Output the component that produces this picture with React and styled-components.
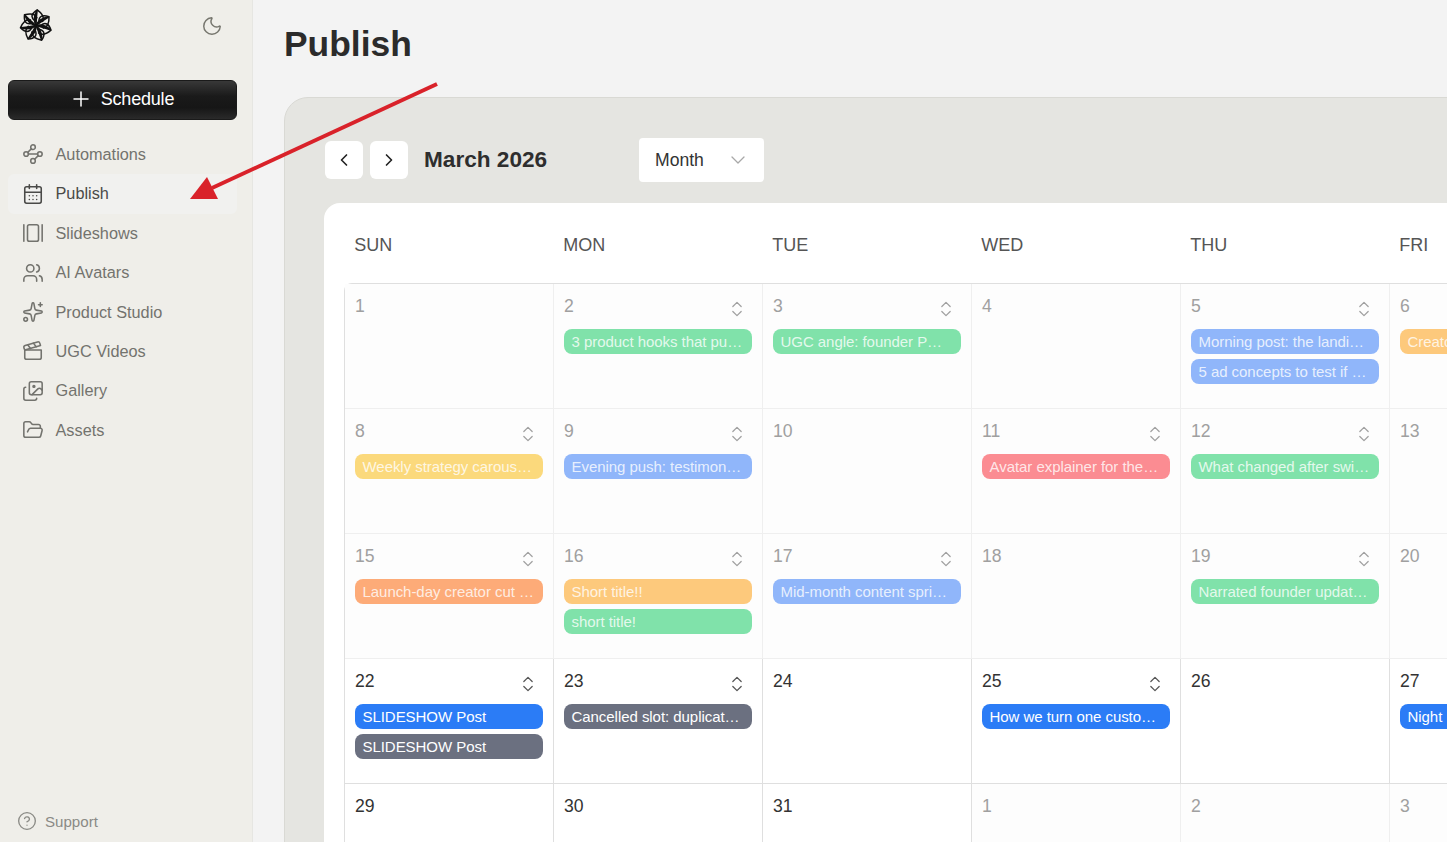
import React from 'react';
import styled, { createGlobalStyle } from 'styled-components';
import {
  CalendarDays,
  ChevronDown,
  ChevronLeft,
  ChevronRight,
  ChevronsUpDown,
  CircleHelp,
  Clapperboard,
  FolderOpen,
  GalleryHorizontal,
  Images,
  Moon,
  Plus,
  Sparkles,
  Users,
  Waypoints,
} from 'lucide-react';

const GlobalStyle = createGlobalStyle`
  html, body {
    margin: 0;
    height: 100%;
    overflow: hidden;
    background: #f3f3f3;
    font-family: "Liberation Sans", Arial, sans-serif;
  }
`;

const Page = styled.div`
  position: relative;
  display: flex;
  width: 100vw;
  height: 100vh;
  overflow: hidden;
`;

const Sidebar = styled.aside`
  flex: 0 0 252px;
  display: flex;
  flex-direction: column;
  background: #efeee9;
  border-right: 1px solid #e6e6e2;
`;

const SidebarTop = styled.div`
  display: flex;
  align-items: center;
  justify-content: space-between;
  height: 50px;
  padding: 0 29px 0 19px;
  color: #77776f;
  svg:last-child {
    margin-top: 2px;
  }
`;

const ScheduleButton = styled.button`
  display: flex;
  align-items: center;
  justify-content: center;
  gap: 8px;
  height: 40px;
  margin: 30px 15px 14.8px 8px;
  padding: 0 2px 2px 0;
  color: #fff;
  font: 18px "Liberation Sans", Arial, sans-serif;
  letter-spacing: -0.2px;
  background: linear-gradient(#383838 0%, #1a1a1a 40%, #161616 70%, #2a2a2a 100%);
  border: 1px solid #1a1a1a;
  border-radius: 6px;
`;

const Nav = styled.nav`
  display: flex;
  flex-direction: column;
  margin: 0 15px 0 8px;
`;

const NavItem = styled.a`
  display: flex;
  align-items: center;
  gap: 11.5px;
  height: 39.4px;
  padding-left: 14px;
  color: ${(p) => (p.$active ? '#4a4a48' : '#73736e')};
  font-size: 16.3px;
  background: ${(p) => (p.$active ? '#f1f1ef' : 'transparent')};
  border-radius: 6px;
`;

const Support = styled.a`
  display: flex;
  align-items: center;
  gap: 8.5px;
  margin-top: auto;
  padding: 0 0 11px 16.5px;
  color: #8a8a85;
  font-size: 15.1px;
`;

const Main = styled.main`
  flex: 1;
  min-width: 0;
  padding-left: 31px;
`;

const Title = styled.h1`
  height: 97px;
  margin: 0;
  padding-top: 22px;
  box-sizing: border-box;
  color: #2b2b2b;
  font-size: 35.4px;
  line-height: 44px;
  font-weight: 700;
`;

const Panel = styled.section`
  width: 1700px;
  height: 900px;
  padding: 40px 0 0 39px;
  box-sizing: border-box;
  background: #e5e5e1;
  border: 1px solid #d9d9d4;
  border-radius: 24px 0 0 0;
`;

const Toolbar = styled.div`
  display: flex;
  align-items: center;
  height: 44px;
  margin-bottom: 21px;
  padding-left: 1px;
`;

const NavButton = styled.button`
  display: flex;
  align-items: center;
  justify-content: center;
  width: 38px;
  height: 38px;
  margin-right: 7px;
  padding: 0;
  color: #222;
  background: #fff;
  border: 0;
  border-radius: 6px;
`;

const Month = styled.h2`
  width: 215px;
  margin: 0 0 0 9px;
  color: #2e2e2e;
  font-size: 22.6px;
  font-weight: 700;
`;

const Select = styled.div`
  display: flex;
  align-items: center;
  justify-content: space-between;
  width: 125px;
  height: 44px;
  padding: 0 14px 0 16px;
  box-sizing: border-box;
  color: #333;
  font-size: 17.6px;
  background: #fff;
  border-radius: 4px;
`;

const Card = styled.div`
  padding: 0 20px;
  background: #fff;
  border-radius: 16px 0 0 0;
`;

const Weekdays = styled.div`
  display: grid;
  grid-template-columns: repeat(7, 209px);
  height: 80px;
`;

const Weekday = styled.div`
  padding: 32px 0 0 10.3px;
  color: #555;
  font-size: 18px;
  line-height: 20px;
`;

const Grid = styled.div`
  display: grid;
  grid-template-columns: repeat(7, 209px);
  grid-auto-rows: 125px;
  border-top: 1px solid #dfdfdf;
  border-left: 1px solid #dfdfdf;
  border-top-left-radius: 8px;
`;

const Cell = styled.div`
  padding: 10px 10px 0;
  box-sizing: border-box;
  background: ${(p) => (p.$dim ? '#fdfdfd' : '#fff')};
  border-right: 1px solid ${(p) => (p.$dim ? '#efefef' : '#dfdfdf')};
  border-bottom: 1px solid ${(p) => (p.$dim ? '#efefef' : '#dfdfdf')};
`;

const DateRow = styled.div`
  display: flex;
  align-items: center;
  justify-content: space-between;
  height: 24px;
  margin-bottom: 11px;
  color: ${(p) => (p.$dim ? '#a0a0a0' : '#333')};
  font-size: 17.6px;
  svg {
    margin: 5px 5px 0 0;
    color: ${(p) => (p.$dim ? '#a0a0a0' : '#555')};
  }
`;

const Pill = styled.div`
  height: 25px;
  margin-bottom: 4.5px;
  padding: 0 9px 0 7.5px;
  overflow: hidden;
  color: ${(p) => (p.$solid ? '#fff' : 'rgba(255, 255, 255, 0.8)')};
  font-size: 15px;
  line-height: 25px;
  letter-spacing: -0.05px;
  white-space: nowrap;
  text-overflow: ellipsis;
  background: ${(p) => p.$color};
  border-radius: 8px;
`;

const ArrowLayer = styled.svg`
  position: absolute;
  top: 0;
  left: 0;
  width: 100%;
  height: 100%;
  pointer-events: none;
`;

const GREEN = '#80e2aa';
const BLUE = '#90b6fa';
const ORANGE = '#fdc97c';
const RED = '#fb8c92';
const YELLOW = '#fbd97c';
const PEACH = '#fdab78';
const SOLID_BLUE = '#2b7cf6';
const SLATE = '#6b7080';

const NAV_ITEMS = [
  { label: 'Automations', Icon: Waypoints },
  { label: 'Publish', Icon: CalendarDays, active: true },
  { label: 'Slideshows', Icon: GalleryHorizontal },
  { label: 'AI Avatars', Icon: Users },
  { label: 'Product Studio', Icon: Sparkles },
  { label: 'UGC Videos', Icon: Clapperboard },
  { label: 'Gallery', Icon: Images },
  { label: 'Assets', Icon: FolderOpen },
];

const WEEKDAYS = ['SUN', 'MON', 'TUE', 'WED', 'THU', 'FRI', 'SAT'];

const DAYS = [
  { n: 1, dim: true },
  { n: 2, dim: true, posts: [['3 product hooks that pull viewers in', GREEN]] },
  { n: 3, dim: true, posts: [['UGC angle: founder POV on launch', GREEN]] },
  { n: 4, dim: true },
  { n: 5, dim: true, posts: [['Morning post: the landing page story', BLUE], ['5 ad concepts to test if the hook holds', BLUE]] },
  { n: 6, dim: true, posts: [['Creator brief', ORANGE]] },
  { n: 7, dim: true },
  { n: 8, dim: true, posts: [['Weekly strategy carousel for founders', YELLOW]] },
  { n: 9, dim: true, posts: [['Evening push: testimonial roundup', BLUE]] },
  { n: 10, dim: true },
  { n: 11, dim: true, posts: [['Avatar explainer for the new feature', RED]] },
  { n: 12, dim: true, posts: [['What changed after switching tools', GREEN]] },
  { n: 13, dim: true },
  { n: 14, dim: true },
  { n: 15, dim: true, posts: [['Launch-day creator cut for reels', PEACH]] },
  { n: 16, dim: true, posts: [['Short title!!', ORANGE], ['short title!', GREEN]] },
  { n: 17, dim: true, posts: [['Mid-month content sprint recap', BLUE]] },
  { n: 18, dim: true },
  { n: 19, dim: true, posts: [['Narrated founder update for March', GREEN]] },
  { n: 20, dim: true },
  { n: 21, dim: true },
  { n: 22, posts: [['SLIDESHOW Post', SOLID_BLUE], ['SLIDESHOW Post', SLATE]] },
  { n: 23, posts: [['Cancelled slot: duplicate creative', SLATE]] },
  { n: 24 },
  { n: 25, posts: [['How we turn one customer call into', SOLID_BLUE]] },
  { n: 26 },
  { n: 27, posts: [['Night post: recap', SOLID_BLUE]] },
  { n: 28 },
  { n: 29 },
  { n: 30 },
  { n: 31 },
  { n: 1, dim: true },
  { n: 2, dim: true },
  { n: 3, dim: true },
  { n: 4, dim: true },
];

const Logo = () => (
  <svg width="34" height="33" viewBox="0 0 34 33" fill="none" stroke="#111" strokeWidth="1.5" strokeLinejoin="round" strokeLinecap="round">
    {[8, 59.4, 110.8, 162.3, 213.7, 265.1, 316.6].map((angle) => (
      <g key={angle} transform={`rotate(${angle} 17 16.5)`}>
        <path d="M15 12 C10 9 11 5 16 0.8 C21 3.5 24.5 7 23 11.5" />
        <path d="M17 16.5 C14 12 13.5 7 16 1.5 C16 7 16.5 12 17 16.5 Z" fill="#111" />
      </g>
    ))}
  </svg>
);

const App = () => (
  <Page>
    <GlobalStyle />
    <Sidebar>
      <SidebarTop>
        <Logo />
        <Moon size={22} strokeWidth={1.6} />
      </SidebarTop>
      <ScheduleButton>
        <Plus size={24} strokeWidth={1.5} />
        Schedule
      </ScheduleButton>
      <Nav>
        {NAV_ITEMS.map(({ label, Icon, active }) => (
          <NavItem key={label} $active={active}>
            <Icon size={22} strokeWidth={1.7} />
            {label}
          </NavItem>
        ))}
      </Nav>
      <Support>
        <CircleHelp size={20} strokeWidth={1.6} />
        Support
      </Support>
    </Sidebar>
    <Main>
      <Title>Publish</Title>
      <Panel>
        <Toolbar>
          <NavButton><ChevronLeft size={20} strokeWidth={2} /></NavButton>
          <NavButton><ChevronRight size={20} strokeWidth={2} /></NavButton>
          <Month>March 2026</Month>
          <Select>
            Month
            <ChevronDown size={24} strokeWidth={1.3} color="#a8a8a8" />
          </Select>
        </Toolbar>
        <Card>
          <Weekdays>
            {WEEKDAYS.map((day) => <Weekday key={day}>{day}</Weekday>)}
          </Weekdays>
          <Grid>
            {DAYS.map(({ n, dim, posts }, i) => (
              <Cell key={i} $dim={dim}>
                <DateRow $dim={dim}>
                  {n}
                  {posts && <ChevronsUpDown size={20} strokeWidth={1.5} />}
                </DateRow>
                {posts && posts.map(([text, color], j) => (
                  <Pill key={j} $color={color} $solid={!dim}>{text}</Pill>
                ))}
              </Cell>
            ))}
          </Grid>
        </Card>
      </Panel>
    </Main>
    <ArrowLayer>
      <line x1="437" y1="84" x2="212" y2="188" stroke="#d9222a" strokeWidth="4" />
      <polygon points="190,199 218,199 207,177" fill="#d9222a" />
    </ArrowLayer>
  </Page>
);

export default App;
